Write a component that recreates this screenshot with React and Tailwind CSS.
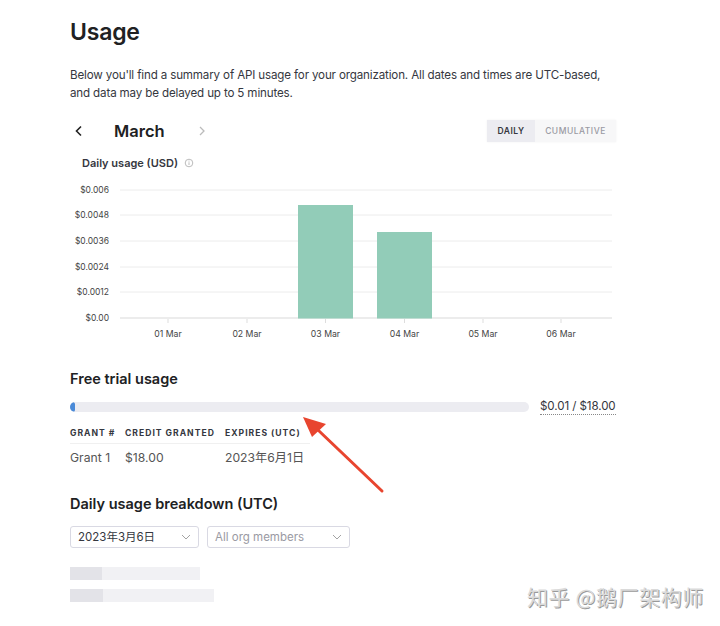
import React from "react";

const font = { fontFamily: 'Inter, "Noto Sans", "Noto Sans CJK SC", sans-serif' };

function Chart() {
  const yLabels = ["$0.006", "$0.0048", "$0.0036", "$0.0024", "$0.0012", "$0.00"];
  const ys = [189, 214, 240, 266, 291, 317];
  const x0 = 120;
  const days = ["01 Mar", "02 Mar", "03 Mar", "04 Mar", "05 Mar", "06 Mar"];
  const centers = [168, 247, 325.5, 404.5, 483, 561];
  return (
    <svg width="560" height="160" viewBox="60 180 560 160" className="block">
      {yLabels.map((l, i) => (
        <g key={l}>
          <text x="109" y={ys[i] + 3} textAnchor="end" fontSize="8.5" fill="#444" style={font}>{l}</text>
          <line x1={x0} x2="612" y1={ys[i]} y2={ys[i]} stroke={i === 5 ? "#d9d9d9" : "#ececec"} strokeWidth="1" />
        </g>
      ))}
      <rect x="298" y="204" width="55" height="113.5" fill="#92ccb8" />
      <rect x="377" y="231" width="55" height="86.5" fill="#92ccb8" />
      {days.map((d, i) => (
        <g key={d}>
          <line x1={centers[i]} x2={centers[i]} y1="318" y2="322" stroke="#ddd" />
          <text x={centers[i]} y="336" textAnchor="middle" fontSize="8.7" fill="#444" style={font}>{d}</text>
        </g>
      ))}
    </svg>
  );
}

export default function App() {
  return (
    <div className="relative w-[720px] h-[626px] bg-white overflow-hidden text-[#202123]" style={font}>
      <div className="pl-[70px] pr-[104px] pt-[17px]">
        <h1 className="text-[23px] font-semibold leading-[30px] tracking-[-0.2px]">Usage</h1>
        <p className="mt-[19px] text-[11.6px] tracking-[-0.15px] leading-[18px] text-[#353740] whitespace-nowrap">
          Below you'll find a summary of API usage for your organization. All dates and times are UTC-based,
          <br />
          and data may be delayed up to 5 minutes.
        </p>

        <div className="mt-[17px] flex items-center justify-between">
          <div className="flex items-center">
            <svg width="10" height="12" viewBox="0 0 10 12" className="ml-[4px]">
              <path d="M7 1.5 L2.5 6 L7 10.5" fill="none" stroke="#222" strokeWidth="1.6" />
            </svg>
            <div className="ml-[30px] text-[16.5px] font-semibold w-[75px]">March</div>
            <svg width="8" height="12" viewBox="0 0 8 12" className="ml-[9px]">
              <path d="M2 2 L6 6 L2 10" fill="none" stroke="#bbb" strokeWidth="1.3" />
            </svg>
          </div>
          <div className="flex h-[22px] text-[8.5px] font-semibold tracking-[0.5px] shadow-[0_0_2px_rgba(0,0,0,0.06)]">
            <div className="w-[48px] flex items-center justify-center bg-[#ececf1] text-[#353740]">DAILY</div>
            <div className="w-[81px] flex items-center justify-center bg-[#f7f7f8] text-[#9a9aa3] font-medium">CUMULATIVE</div>
          </div>
        </div>

        <div className="mt-[11px] ml-[12px] flex items-center text-[11px] font-semibold text-[#353740]">
          Daily usage (USD)
          <svg width="10" height="10" viewBox="0 0 10 10" className="ml-[6px]">
            <circle cx="5" cy="5" r="3.8" fill="none" stroke="#aaa" strokeWidth="0.8" />
            <line x1="5" y1="4.3" x2="5" y2="7" stroke="#aaa" strokeWidth="0.8" />
            <circle cx="5" cy="3" r="0.5" fill="#aaa" />
          </svg>
        </div>
      </div>

      <div className="ml-[60px] mt-[10px]">
        <Chart />
      </div>

      <div className="pl-[70px] pr-[104px]">
        <h2 className="mt-[28px] text-[14.5px] font-semibold leading-[20px]">Free trial usage</h2>
        <div className="mt-[10px] flex items-center">
          <div className="w-[459px] h-[10px] rounded-full bg-[#ececf1] overflow-hidden shrink-0">
            <div className="w-[5px] h-full rounded-full bg-[#4a8ad8]" />
          </div>
          <div className="ml-[11px] text-[11.6px] tracking-[-0.1px] text-[#353740] border-b border-dotted border-[#888] leading-[15px] whitespace-nowrap">$0.01 / $18.00</div>
        </div>

        <div className="mt-[8px] flex text-[8.6px] font-bold tracking-[1px] text-[#353740] h-[20px] items-center">
          <div className="w-[55px]">GRANT #</div>
          <div className="w-[100px]">CREDIT GRANTED</div>
          <div>EXPIRES (UTC)</div>
        </div>
        <div className="w-[240px] h-px bg-[#f0f0f0]" />
        <div className="flex text-[12.2px] text-[#555] h-[28px] items-center">
          <div className="w-[55px]">Grant 1</div>
          <div className="w-[100px]">$18.00</div>
          <div>2023年6月1日</div>
        </div>

        <h2 className="mt-[22px] text-[14.5px] font-semibold leading-[20px]">Daily usage breakdown (UTC)</h2>
        <div className="mt-[12px] flex gap-[8px]">
          <div className="w-[129px] h-[22px] border border-[#d9d9e3] rounded-[3px] flex items-center justify-between px-[7px] text-[11.5px] text-[#353740]">
            <span>2023年3月6日</span>
            <svg width="10" height="6" viewBox="0 0 10 6"><path d="M1 1 L5 5 L9 1" fill="none" stroke="#999" strokeWidth="0.9" /></svg>
          </div>
          <div className="w-[143px] h-[22px] border border-[#d9d9e3] rounded-[3px] flex items-center justify-between px-[7px] text-[11.5px] text-[#9a9aa3]">
            <span>All org members</span>
            <svg width="10" height="6" viewBox="0 0 10 6"><path d="M1 1 L5 5 L9 1" fill="none" stroke="#999" strokeWidth="0.9" /></svg>
          </div>
        </div>

        <div className="mt-[19px] w-[130px] h-[13px] flex">
          <div className="w-[32px] bg-[#e3e3e8]" />
          <div className="flex-1 bg-[#f1f1f4]" />
        </div>
        <div className="mt-[9px] w-[144px] h-[13px] flex">
          <div className="w-[33px] bg-[#e3e3e8]" />
          <div className="flex-1 bg-[#f1f1f4]" />
        </div>
      </div>

      <svg className="absolute left-0 top-0 pointer-events-none" width="720" height="626">
        <line x1="382" y1="491" x2="318" y2="430" stroke="#e8452f" strokeWidth="3" strokeLinecap="round" />
        <polygon points="303,417 326,424 312,437" fill="#e8452f" />
      </svg>

      <div className="absolute left-[527px] top-[582px] text-[21px] leading-[29px] text-[#dadada] tracking-[0.6px] [text-shadow:1px_1px_0_#9a9a9a]" style={{ fontFamily: '"Noto Sans CJK SC", sans-serif' }}>
        知乎 @鹅厂架构师
      </div>
    </div>
  );
}
